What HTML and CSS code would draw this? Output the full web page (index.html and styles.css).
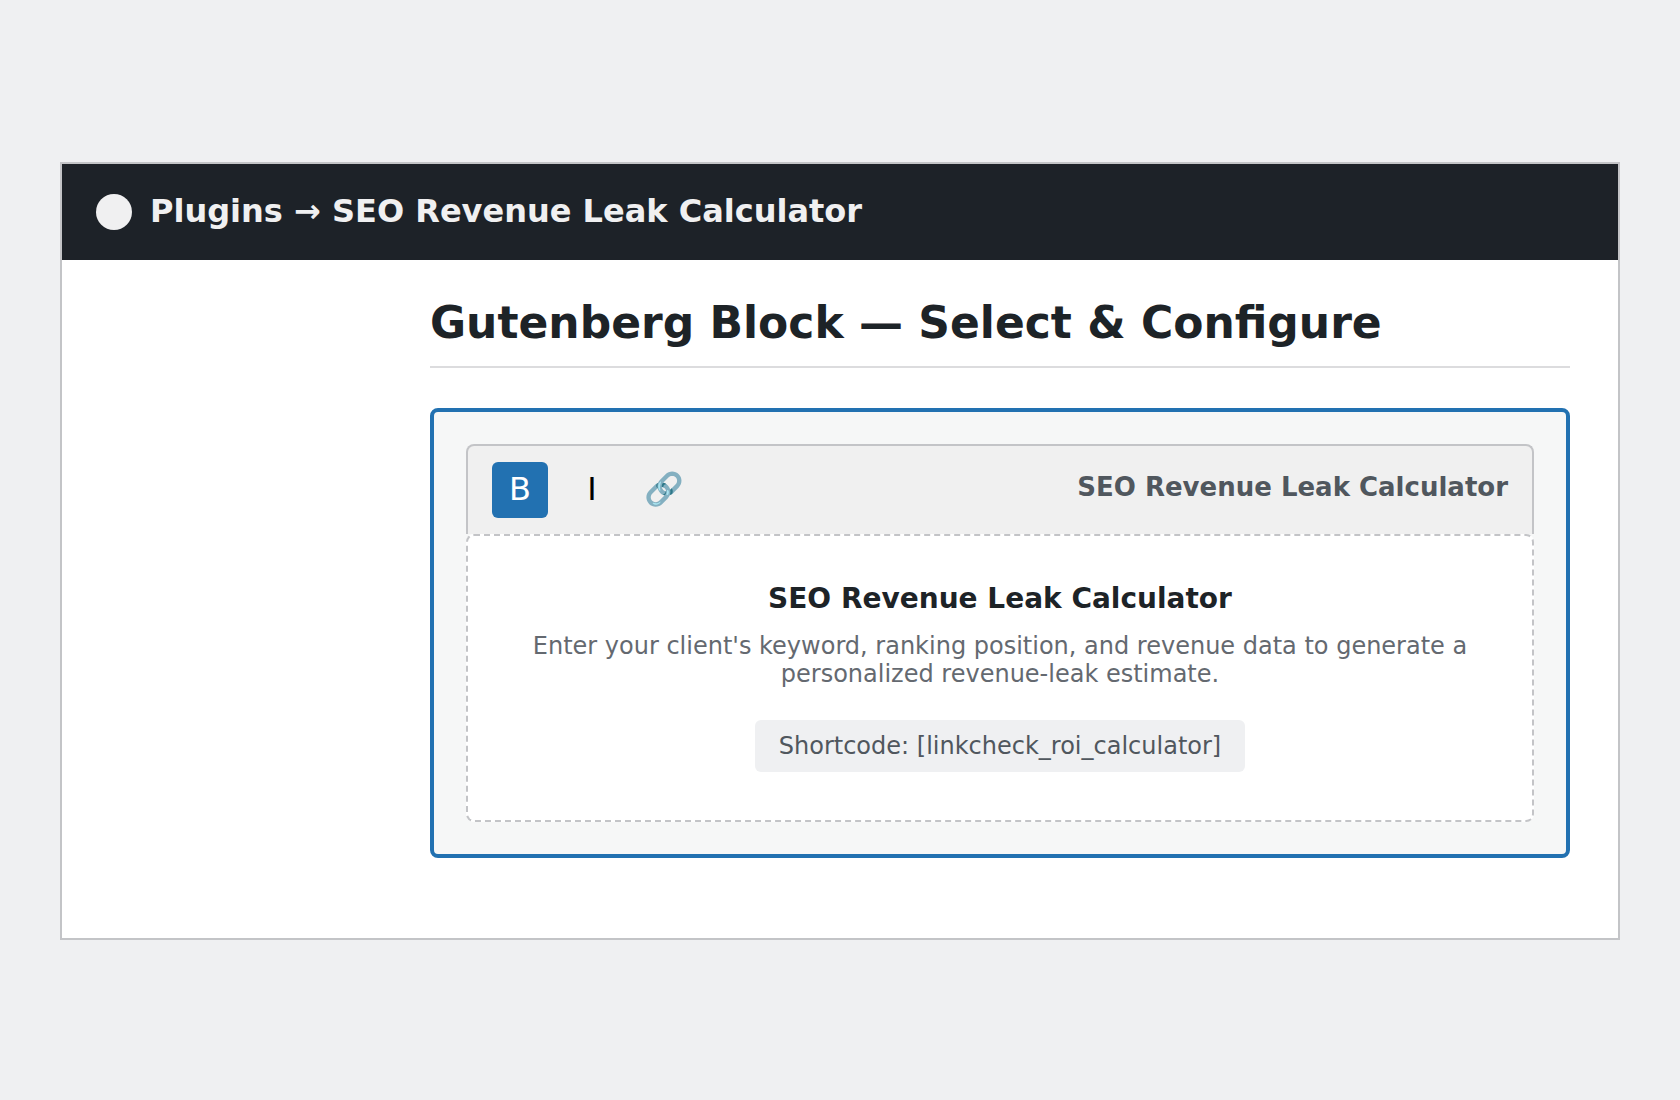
FILE: index.html
```
<!DOCTYPE html>
<html lang="en">
<head>
    <meta charset="UTF-8">
    <meta name="viewport" content="width=device-width, initial-scale=1.0">
    <title>Plugins - SEO Revenue Leak Calculator</title>
    <link rel="stylesheet" href="styles.css">
</head>
<body>
    <div class="window">
        <header class="admin-bar">
            <span class="logo"></span>
            <span class="admin-title">Plugins → SEO Revenue Leak Calculator</span>
        </header>
        <main class="content">
            <h1>Gutenberg Block — Select &amp; Configure</h1>
            <section class="block">
                <div class="toolbar">
                    <button type="button" class="tool active">B</button>
                    <button type="button" class="tool">I</button>
                    <button type="button" class="tool" aria-label="Link">🔗</button>
                    <span class="block-name">SEO Revenue Leak Calculator</span>
                </div>
                <div class="preview">
                    <h2>SEO Revenue Leak Calculator</h2>
                    <p>Enter your client's keyword, ranking position, and revenue data to generate a personalized revenue-leak estimate.</p>
                    <span class="shortcode">Shortcode: [linkcheck_roi_calculator]</span>
                </div>
            </section>
        </main>
    </div>
</body>
</html>
```

FILE: styles.css
```
* {
    box-sizing: border-box;
}
body {
    font-family: "DejaVu Sans", sans-serif;
    background: #eff0f2;
    color: #1d2327;
    margin: 0;
    padding: 62px 60px 60px;
    min-height: 100vh;
    display: flex;
    align-items: center;
}
.window {
    flex: 1;
    background: #fff;
    border: 2px solid #c3c4c7;
}
.admin-bar {
    display: flex;
    align-items: center;
    gap: 18px;
    min-height: 96px;
    padding: 0 34px;
    background: #1d2228;
    color: #f0f0f1;
}
.logo {
    width: 36px;
    height: 36px;
    border-radius: 50%;
    background: #f0f0f1;
}
.admin-title {
    padding-bottom: 2px;
    font-size: 32px;
    font-weight: bold;
}
.content {
    padding: 38px 48px 80px 368px;
}
h1 {
    margin: 0 0 40px;
    padding-bottom: 18px;
    border-bottom: 2px solid #dcdcde;
    font-size: 44px;
    line-height: 50px;
}
.block {
    padding: 32px;
    background: #f6f7f7;
    border: 4px solid #2271b1;
    border-radius: 8px;
}
.toolbar {
    display: flex;
    align-items: center;
    gap: 16px;
    padding: 16px 24px;
    background: #f0f0f0;
    border: 2px solid #c3c4c7;
    border-bottom: none;
    border-radius: 8px 8px 0 0;
}
.tool {
    width: 56px;
    height: 56px;
    padding: 0 0 2px;
    border: none;
    border-radius: 6px;
    background: transparent;
    color: #000;
    font-family: inherit;
    font-size: 32px;
    cursor: pointer;
}
.tool.active {
    background: #2271b1;
    color: #fff;
}
.block-name {
    margin-left: auto;
    padding-bottom: 6px;
    color: #50575e;
    font-size: 26px;
    font-weight: bold;
}
.preview {
    padding: 48px;
    background: #fff;
    border: 2px dashed #c3c4c7;
    border-radius: 8px;
    text-align: center;
}
h2 {
    margin: 0 0 18px;
    font-size: 28px;
    line-height: 30px;
}
.preview p {
    margin: 0 0 32px;
    color: #646970;
    font-size: 24px;
    line-height: 28px;
}
.shortcode {
    display: inline-block;
    padding: 12px 24px;
    background: #eff0f2;
    border-radius: 6px;
    color: #50575e;
    font-size: 24px;
    line-height: 28px;
    vertical-align: top;
}
```
